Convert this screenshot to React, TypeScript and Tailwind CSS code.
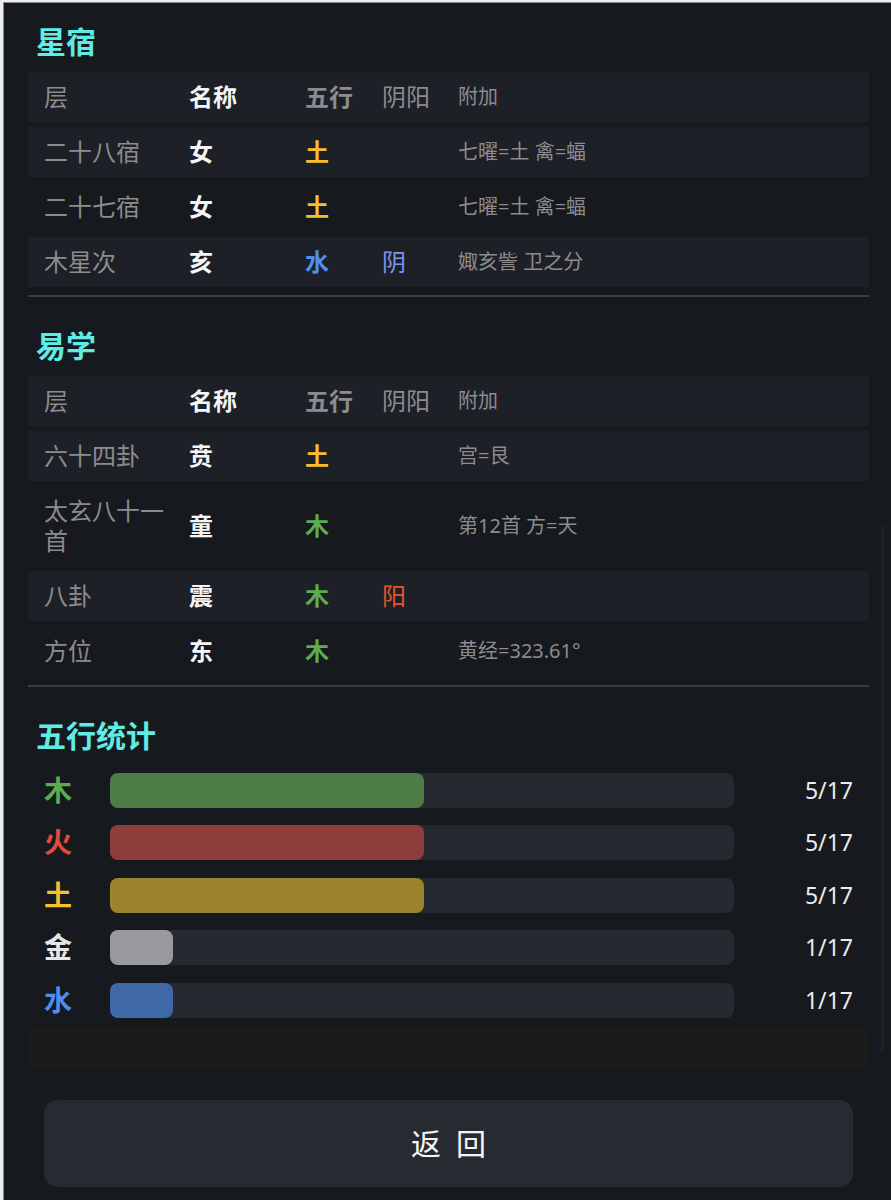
import React from "react";

type Row = {
  layer: string;
  name: string;
  wx: string;
  wxColor: string;
  yy: string;
  yyColor: string;
  extra: string;
};

const WX: Record<string, string> = {
  木: "text-[#5cad4f]",
  火: "text-[#e24a3d]",
  土: "text-[#f4c02c]",
  金: "text-[#e6e6e6]",
  水: "text-[#4f8ef0]",
};

const xingxiu: Row[] = [
  { layer: "二十八宿", name: "女", wx: "土", wxColor: WX["土"], yy: "", yyColor: "", extra: "七曜=土 禽=蝠" },
  { layer: "二十七宿", name: "女", wx: "土", wxColor: WX["土"], yy: "", yyColor: "", extra: "七曜=土 禽=蝠" },
  { layer: "木星次", name: "亥", wx: "水", wxColor: WX["水"], yy: "阴", yyColor: "text-[#7b95ec]", extra: "娵亥訾 卫之分" },
];

const yixue: Row[] = [
  { layer: "六十四卦", name: "贲", wx: "土", wxColor: WX["土"], yy: "", yyColor: "", extra: "宫=艮" },
  { layer: "太玄八十一首", name: "童", wx: "木", wxColor: WX["木"], yy: "", yyColor: "", extra: "第12首 方=天" },
  { layer: "八卦", name: "震", wx: "木", wxColor: WX["木"], yy: "阳", yyColor: "text-[#e2572f]", extra: "" },
  { layer: "方位", name: "东", wx: "木", wxColor: WX["木"], yy: "", yyColor: "", extra: "黄经=323.61°" },
];

const stats = [
  { k: "木", color: WX["木"], fill: "bg-[#4e7c47]", pct: 50.3, v: "5/17" },
  { k: "火", color: WX["火"], fill: "bg-[#8f3d3a]", pct: 50.3, v: "5/17" },
  { k: "土", color: WX["土"], fill: "bg-[#9c832c]", pct: 50.3, v: "5/17" },
  { k: "金", color: WX["金"], fill: "bg-[#9a9a9e]", pct: 10.1, v: "1/17" },
  { k: "水", color: WX["水"], fill: "bg-[#3f69a6]", pct: 10.1, v: "1/17" },
];

function TableRow({ r, shaded }: { r: Row; shaded: boolean }) {
  return (
    <div
      className={`grid grid-cols-[145px_116px_77px_76px_1fr] items-center py-[10px] leading-[30px] ${
        shaded ? "bg-[#1e2028]" : ""
      }`}
    >
      <div className="pl-4 text-[24px] text-[#8c8c8c]">{r.layer}</div>
      <div className="pl-4 text-[24px] font-bold text-[#f5f5f5]">{r.name}</div>
      <div className={`pl-4 text-[24px] font-bold ${r.wxColor}`}>{r.wx}</div>
      <div className={`pl-4 text-[24px] ${r.yyColor}`}>{r.yy}</div>
      <div className="pl-4 text-[20px] text-[#8c8c8c]">{r.extra}</div>
    </div>
  );
}

function Table({ rows }: { rows: Row[] }) {
  return (
    <div className="flex flex-col gap-[5px]">
      <div className="grid grid-cols-[145px_116px_77px_76px_1fr] items-center py-[10px] leading-[30px] bg-[#1e2028]">
        <div className="pl-4 text-[24px] text-[#8c8c8c]">层</div>
        <div className="pl-4 text-[24px] font-bold text-[#f5f5f5]">名称</div>
        <div className="pl-4 text-[24px] font-bold text-[#8c8c8c]">五行</div>
        <div className="pl-4 text-[24px] text-[#8c8c8c]">阴阳</div>
        <div className="pl-4 text-[20px] text-[#8c8c8c]">附加</div>
      </div>
      {rows.map((r, i) => (
        <TableRow key={i} r={r} shaded={i % 2 === 0} />
      ))}
    </div>
  );
}

function Title({ children, className = "" }: { children: React.ReactNode; className?: string }) {
  return (
    <div className={`pl-2 text-[30px] font-bold leading-[40px] text-[#5fece5] ${className}`}>{children}</div>
  );
}

export default function App() {
  return (
    <div className="min-h-[1200px] bg-[#ececec] pt-[2px] pl-[3px] font-['Noto_Sans','Noto_Sans_CJK_SC',sans-serif]">
      <div className="relative border-t border-l border-[#8a8a8a] bg-[#16191e] pl-6 pr-[22px] pt-[19px] pb-[13px]">
        <Title>星宿</Title>
        <div className="mt-[10px]">
          <Table rows={xingxiu} />
        </div>
        <div className="mt-[8px] h-[2px] bg-[#3a3d44]" />

        <Title className="mt-[29px]">易学</Title>
        <div className="mt-[10px]">
          <Table rows={yixue} />
        </div>
        <div className="mt-[9px] h-[2px] bg-[#3a3d44]" />

        <Title className="mt-[29px]">五行统计</Title>
        <div className="mt-[17px] flex flex-col gap-[17.4px]">
          {stats.map((s) => (
            <div key={s.k} className="flex h-[35px] items-center">
              <div className={`w-[82px] pl-4 text-[28px] font-bold leading-[35px] ${s.color}`}>{s.k}</div>
              <div className="h-[35px] flex-1 rounded-lg bg-[#262930]">
                <div className={`h-full rounded-lg ${s.fill}`} style={{ width: `${s.pct}%` }} />
              </div>
              <div className="w-[135px] pr-4 text-right text-[23px] leading-[35px] text-[#ececec]">{s.v}</div>
            </div>
          ))}
        </div>

        <div className="mt-[10px] h-[40px] bg-[#1b1b1a]" />

        <div className="mx-4 mt-[32px] flex h-[87px] items-center justify-center rounded-[14px] bg-[#282a31]">
          <span className="pl-[15px] text-[30px] tracking-[15px] text-[#f5f5f5]">返回</span>
        </div>

        <div className="absolute right-[7px] top-[522px] h-[527px] w-[3px] rounded-full bg-[#1e2126]" />
      </div>
    </div>
  );
}
